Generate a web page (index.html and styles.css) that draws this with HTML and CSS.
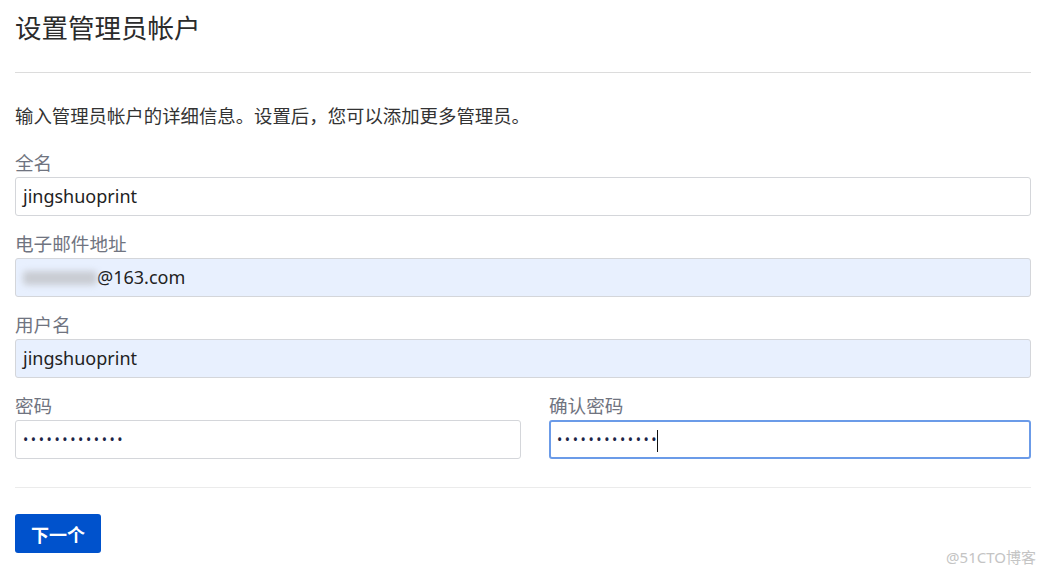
FILE: index.html
```html
<!DOCTYPE html>
<html lang="zh-CN">
<head>
  <meta charset="UTF-8" />
  <title>设置管理员帐户</title>
  <link rel="stylesheet" href="styles.css">
</head>
<body>
  <div class="setup">
    <h1>设置管理员帐户</h1>
    <hr class="rule">
    <p class="intro">输入管理员帐户的详细信息。设置后，您可以添加更多管理员。</p>

    <div class="form-group">
      <label>全名</label>
      <div class="field">jingshuoprint</div>
    </div>

    <div class="form-group">
      <label>电子邮件地址</label>
      <div class="field autofill"><span class="blurred"></span>@163.com</div>
    </div>

    <div class="form-group">
      <label>用户名</label>
      <div class="field autofill">jingshuoprint</div>
    </div>

    <div class="form-row">
      <div class="form-group half">
        <label>密码</label>
        <div class="field dots">•••••••••••••</div>
      </div>
      <div class="form-group">
        <label>确认密码</label>
        <div class="field dots focused">•••••••••••••<span class="caret"></span></div>
      </div>
    </div>

    <hr class="rule bottom">
    <button class="btn-next">下一个</button>
  </div>

  <div class="watermark">@51CTO博客</div>
</body>
</html>
```

FILE: styles.css
```css
body {
  margin: 0;
  background: #fff;
  color: #333;
  font-family: "Noto Sans", "Noto Sans CJK SC", sans-serif;
}
.setup {
  padding: 0 15px;
}
h1 {
  margin: 11px 0 0;
  font-size: 26.5px;
  font-weight: 400;
  line-height: 34px;
  color: #2b2b2b;
}
.rule {
  border: none;
  border-top: 1px solid #dcdcdc;
  margin: 27px 0 31px;
}
.rule.bottom {
  border-top-color: #ebebeb;
  margin: 28px 0 26px;
}
.intro {
  margin: 0 0 23px;
  font-size: 18.4px;
  line-height: 24px;
}
.form-group {
  margin-bottom: 16px;
  flex: 1;
}
.form-group label {
  display: block;
  font-size: 18.6px;
  line-height: 24px;
  color: #707480;
  margin-bottom: 2px;
}
.form-row {
  display: flex;
  gap: 28px;
}
.form-row .form-group {
  margin-bottom: 0;
}
.form-row .half {
  flex: 0 0 506px;
}
.field {
  height: 39px;
  box-sizing: border-box;
  border: 1px solid #d4d6da;
  border-radius: 3px;
  padding: 0 7px;
  font-size: 18px;
  line-height: 37px;
  color: #222;
  background: #fff;
  white-space: nowrap;
}
.field.autofill {
  background: #e8f0fe;
}
.field.focused {
  border: 2px solid #6b9be8;
  padding: 0 6px;
  line-height: 35px;
}
.blurred {
  display: inline-block;
  width: 74px;
  height: 14px;
  vertical-align: -1px;
  background: #c9ccd3;
  border-radius: 4px;
  filter: blur(3px);
}
.dots {
  font-size: 14px;
  letter-spacing: 2.6px;
  color: #1d2547;
}
.caret {
  display: inline-block;
  width: 1px;
  height: 22px;
  background: #111;
  vertical-align: middle;
  margin-left: -2px;
}
.btn-next {
  display: block;
  width: 86px;
  height: 39px;
  border: none;
  border-radius: 3px;
  background: #0052cc;
  color: #fff;
  font-family: inherit;
  font-size: 18px;
  font-weight: 700;
  cursor: pointer;
}
.watermark {
  position: absolute;
  right: 10px;
  bottom: 8px;
  font-size: 15px;
  color: #c4c4c4;
}
```
